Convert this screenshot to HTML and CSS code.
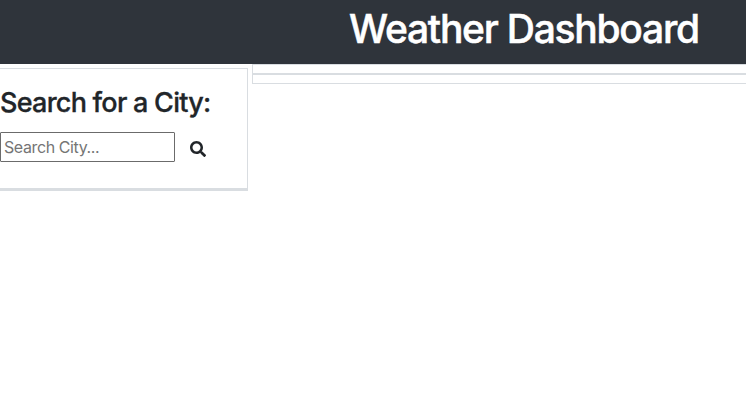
FILE: index.html
```
<!DOCTYPE html>
<html lang="en">
<head>
<meta charset="utf-8">
<title>Weather Dashboard</title>
<link rel="stylesheet" href="styles.css">
</head>
<body>
<header class="header"><h1 class="title">Weather Dashboard</h1></header>
<main class="layout">
  <aside class="search">
    <h2 class="search-title">Search for a City:</h2>
    <form class="search-form">
      <input class="search-input" type="text" placeholder="Search City...">
      <button class="search-button" type="button" aria-label="Search">
        <svg class="icon" viewBox="0 0 512 512"><path d="M505 442.700 405.300 343c-4.500-4.500-10.600-7-17-7H372c27.600-35.300 44-79.700 44-128C416 93.100 322.900 0 208 0S0 93.100 0 208s93.100 208 208 208c48.300 0 92.700-16.400 128-44v16.300c0 6.400 2.500 12.500 7 17l99.700 99.700c9.400 9.400 24.600 9.400 33.900 0l28.300-28.300c9.400-9.400 9.400-24.600.1-34zM208 336c-70.700 0-128-57.200-128-128 0-70.700 57.200-128 128-128 70.700 0 128 57.200 128 128 0 70.700-57.200 128-128 128z"/></svg>
      </button>
    </form>
  </aside>
  <section class="results">
    <div class="current"></div>
    <div class="forecast"></div>
  </section>
</main>
</body>
</html>
```
FILE: styles.css
```
* { box-sizing: border-box; }
body {
  margin: 0;
  overflow: hidden;
  background: #fff;
  color: #212529;
  font-family: Inter, "Liberation Sans", sans-serif;
}
.header {
  height: 64px;
  padding: 5px 0 0 349px;
  background: #2f343b;
  color: #fff;
}
.title {
  margin: 0;
  font-size: 39px;
  line-height: 48px;
  font-weight: 500;
  letter-spacing: -1.25px;
  -webkit-text-stroke: 0.5px currentColor;
  white-space: nowrap;
}
.layout {
  display: flex;
  align-items: flex-start;
}
.search {
  flex: none;
  width: 248px;
  height: 123px;
  margin-top: 4px;
  padding-top: 17px;
  border: solid #d9dde1;
  border-width: 1px 1px 3px 0;
}
.search-title {
  margin: 0 0 12px;
  font-size: 27px;
  line-height: 34px;
  font-weight: 500;
  letter-spacing: -0.75px;
  -webkit-text-stroke: 0.3px currentColor;
  white-space: nowrap;
}
.search-form {
  display: flex;
  align-items: center;
}
.search-input {
  width: 175px;
  height: 30px;
  padding: 1px 3px;
  border: 1px solid #6b6b6b;
  border-radius: 1px;
  font: 400 16px Inter, "Liberation Sans", sans-serif;
  letter-spacing: -0.4px;
}
.search-input::placeholder { color: #757575; }
.search-button {
  display: flex;
  margin: 4px 0 0 15px;
  padding: 0;
  border: 0;
  background: none;
  color: #212529;
}
.icon {
  width: 16px;
  height: 16px;
  fill: currentColor;
}
.results {
  flex: 1;
  margin-left: 4px;
}
.current,
.forecast {
  height: 10px;
  border: 1px solid #d9dde1;
  border-right: 0;
}
```
